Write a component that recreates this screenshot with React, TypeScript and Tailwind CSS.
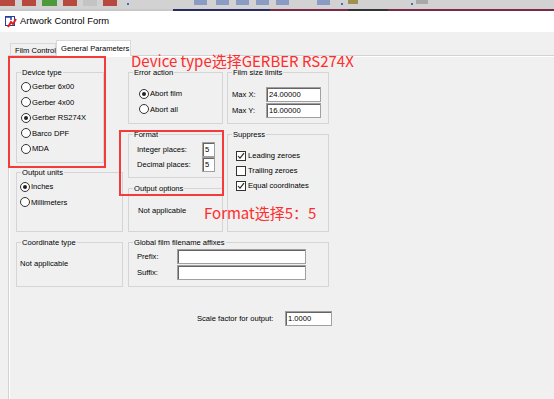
import { ReactNode } from "react";

function Radio({ checked }: { checked?: boolean }) {
    return (
        <span className="w-[10px] h-[10px] rounded-full border border-[#333] bg-white flex items-center justify-center shrink-0">
            {checked && <span className="w-[4px] h-[4px] rounded-full bg-[#222]" />}
        </span>
    );
}

function Check({ checked }: { checked?: boolean }) {
    return (
        <span className="w-[10px] h-[10px] border border-[#333] bg-white flex items-center justify-center shrink-0">
            {checked && (
                <svg width="8" height="8" viewBox="0 0 8 8">
                    <path d="M1 4 L3 6.2 L7 1.2" fill="none" stroke="#222" strokeWidth="1.1" />
                </svg>
            )}
        </span>
    );
}

function Group(props: { label: string; className: string; inner: string; children?: ReactNode }) {
    return (
        <fieldset className={"border border-[#d5d5d5] shrink-0 " + props.className}>
            <legend className="ml-[4px] px-[1px] leading-[13px]">{props.label}</legend>
            <div className={props.inner}>{props.children}</div>
        </fieldset>
    );
}

function Field({ value, className }: { value?: string; className: string }) {
    return (
        <div
            className={
                "h-[15px] bg-white border border-[#a0a0a0] shadow-[inset_1px_1px_0_#646464] pl-[2px] flex items-center leading-none " +
                className
            }
        >
            {value}
        </div>
    );
}

function Opt({ label, checked }: { label: string; checked?: boolean }) {
    return (
        <div className="h-[15.5px] flex items-center gap-[1px]">
            <Radio checked={checked} />
            <span>{label}</span>
        </div>
    );
}

function Box({ label, checked }: { label: string; checked?: boolean }) {
    return (
        <div className="h-[15px] flex items-center gap-[2px]">
            <Check checked={checked} />
            <span>{label}</span>
        </div>
    );
}

function TopStrip() {
    return (
        <div className="h-[11px] bg-[#d2d2d2] flex flex-col">
            <div className="h-[7px] flex items-start">
                <div className="w-[15px] h-[6px] bg-[#b8493e]" />
                <div className="w-[14px] h-[6px] bg-[#b8493e] ml-[7px]" />
                <div className="w-[15px] h-[6px] bg-[#4c9a3c] ml-[6px]" />
                <div className="w-[14px] h-[6px] bg-[#b8493e] ml-[6px]" />
                <div className="w-[14px] h-[6px] bg-[#c4c4c4] ml-[6px]" />
                <div className="w-[14px] h-[6px] bg-[#b8493e] ml-[6px]" />
                <div className="w-[2px] h-[2px] bg-[#3a6fd0] ml-[10px] mt-[3px]" />
                <div className="w-[13px] h-[5px] bg-[#8a9cc4] ml-[65px]" />
                <div className="w-[13px] h-[5px] bg-[#8a9cc4] ml-[9px]" />
                <div className="w-[13px] h-[5px] bg-[#8a9cc4] ml-[7px]" />
                <div className="w-[13px] h-[5px] bg-[#8a9cc4] ml-[7px]" />
                <div className="w-[13px] h-[5px] bg-[#8a9cc4] ml-[7px]" />
                <div className="w-[13px] h-[5px] bg-[#8a9cc4] ml-[28px]" />
                <div className="w-[2px] h-[2px] bg-[#3a6fd0] ml-[11px] mt-[3px]" />
                <div className="w-[10px] h-[4px] bg-[#a0924e] ml-[5px]" />
                <div className="w-[2px] h-[2px] bg-[#3a6fd0] ml-[53px] mt-[3px]" />
                <div className="w-[12px] h-[4px] bg-[#a8a8a8] ml-[3px]" />
            </div>
            <div className="h-[2px] mt-auto flex">
                <div className="w-[173px] bg-[#c8c8c8]" />
                <div className="w-[97px] bg-[#2a2b60]" />
                <div className="w-[78px] bg-[#7a2a48]" />
                <div className="w-[40px] bg-[#333]" />
                <div className="flex-1 bg-[#7a2a48]" />
            </div>
        </div>
    );
}

export default function App() {
    return (
        <div className="w-[554px] h-[399px] bg-[#f0f0f0] relative overflow-hidden font-['Liberation_Sans',Arial,sans-serif] text-[7.6px] text-black">
            <TopStrip />
            <div className="h-[21px] bg-white flex items-center pl-[5px] gap-[3px] text-[9.4px]">
                <svg width="12" height="12" viewBox="0 0 12 12">
                    <rect x="0.5" y="0.5" width="9" height="9" fill="#fff" stroke="#2a3f9a" />
                    <path d="M1 1 H6 V4" fill="none" stroke="#2a3f9a" strokeWidth="1.5" />
                    <path d="M3 11 L6 6 L8 8 L11 3" fill="none" stroke="#e02020" strokeWidth="2" />
                </svg>
                <span>Artwork Control Form</span>
            </div>

            <div className="pt-[8px]">
                <div className="flex items-end pl-[10px] h-[16px] relative z-10 -mb-px">
                    <div className="h-[13px] w-[46px] border border-b-0 border-[#d9d9d9] flex items-center pl-[4px] pt-[1px] whitespace-nowrap">
                        Film Control
                    </div>
                    <div className="h-[16px] w-[75px] border border-b-0 border-[#d9d9d9] bg-white flex items-center pl-[4px] whitespace-nowrap">
                        General Parameters
                    </div>
                </div>
                <div className="ml-[8px] border-l border-t border-[#d3d3d3] shadow-[inset_1px_1px_0_#fff] h-[344px] pl-[7px] pt-[10px]">
                    <div className="flex">
                        <div className="flex flex-col w-[107px]">
                            <Group label="Device type" className="w-[88px] h-[97px]" inner="pl-[4px]">
                                <Opt label="Gerber 6x00" />
                                <Opt label="Gerber 4x00" />
                                <Opt label="Gerber RS274X" checked />
                                <Opt label="Barco DPF" />
                                <Opt label="MDA" />
                            </Group>
                            <Group label="Output units" className="w-[107px] h-[66px] mt-[3px]" inner="pl-[3px]">
                                <Opt label="Inches" checked />
                                <Opt label="Millimeters" />
                            </Group>
                        </div>
                        <div className="flex flex-col w-[95px] ml-[5px]">
                            <Group label="Error action" className="h-[58px]" inner="pl-[10px] pt-[7px]">
                                <Opt label="Abort film" checked />
                                <Opt label="Abort all" />
                            </Group>
                            <Group label="Format" className="h-[50px] mt-[4px]" inner="pl-[8px] pt-[1px]">
                                <div className="h-[15px] flex items-center">
                                    <span className="w-[65px]">Integer places:</span>
                                    <Field value="5" className="w-[13px]" />
                                </div>
                                <div className="h-[15px] flex items-center">
                                    <span className="w-[65px]">Decimal places:</span>
                                    <Field value="5" className="w-[13px]" />
                                </div>
                            </Group>
                            <Group label="Output options" className="h-[50px] mt-[4px]" inner="pl-[9px] pt-[8px]">
                                <div className="h-[15px] flex items-center">Not applicable</div>
                            </Group>
                        </div>
                        <div className="flex flex-col w-[102px] ml-[4px]">
                            <Group label="Film size limits" className="h-[58px]" inner="pl-[4px] pt-[8px]">
                                <div className="h-[16px] flex items-start">
                                    <span className="w-[34px] h-[15px] flex items-center">Max X:</span>
                                    <Field value="24.00000" className="w-[55px]" />
                                </div>
                                <div className="h-[16px] flex items-start">
                                    <span className="w-[34px] h-[15px] flex items-center">Max Y:</span>
                                    <Field value="16.00000" className="w-[55px]" />
                                </div>
                            </Group>
                            <Group label="Suppress" className="h-[104px] mt-[4px]" inner="pl-[8px] pt-[7px]">
                                <Box label="Leading zeroes" checked />
                                <Box label="Trailing zeroes" />
                                <Box label="Equal coordinates" checked />
                            </Group>
                        </div>
                    </div>
                    <div className="flex mt-[4px]">
                        <Group label="Coordinate type" className="w-[107px] h-[51px]" inner="pl-[3px] pt-[7px]">
                            <div className="h-[15px] flex items-center">Not applicable</div>
                        </Group>
                        <Group label="Global film filename affixes" className="w-[201px] h-[51px] ml-[5px]" inner="pl-[8px]">
                            <div className="h-[16px] flex items-start">
                                <span className="w-[40px] h-[15px] flex items-center">Prefix:</span>
                                <Field className="w-[129px]" />
                            </div>
                            <div className="h-[16px] flex items-start">
                                <span className="w-[40px] h-[15px] flex items-center">Suffix:</span>
                                <Field className="w-[129px]" />
                            </div>
                        </Group>
                    </div>
                    <div className="flex items-center mt-[24px] ml-[181px]">
                        <span className="w-[88px]">Scale factor for output:</span>
                        <Field value="1.0000" className="w-[47px]" />
                    </div>
                </div>
            </div>

            {/* annotations drawn over the dialog */}
            <div className="absolute left-[8px] top-[56px] w-[98px] h-[112px] border-2 border-[#f53a3a]" />
            <div className="absolute left-[119px] top-[130px] w-[105px] h-[66px] border-2 border-[#f53a3a]" />
            <div className="absolute left-[131px] top-[55px] text-[15px] leading-[12px] text-[#fe2d2d] font-['Noto_Sans_CJK_SC',sans-serif] whitespace-nowrap">
                Device type选择GERBER RS274X
            </div>
            <div className="absolute left-[204px] top-[206px] text-[15px] leading-[13px] text-[#fe2d2d] font-['Noto_Sans_CJK_SC',sans-serif] whitespace-nowrap">
                Format选择5：5
            </div>
        </div>
    );
}
